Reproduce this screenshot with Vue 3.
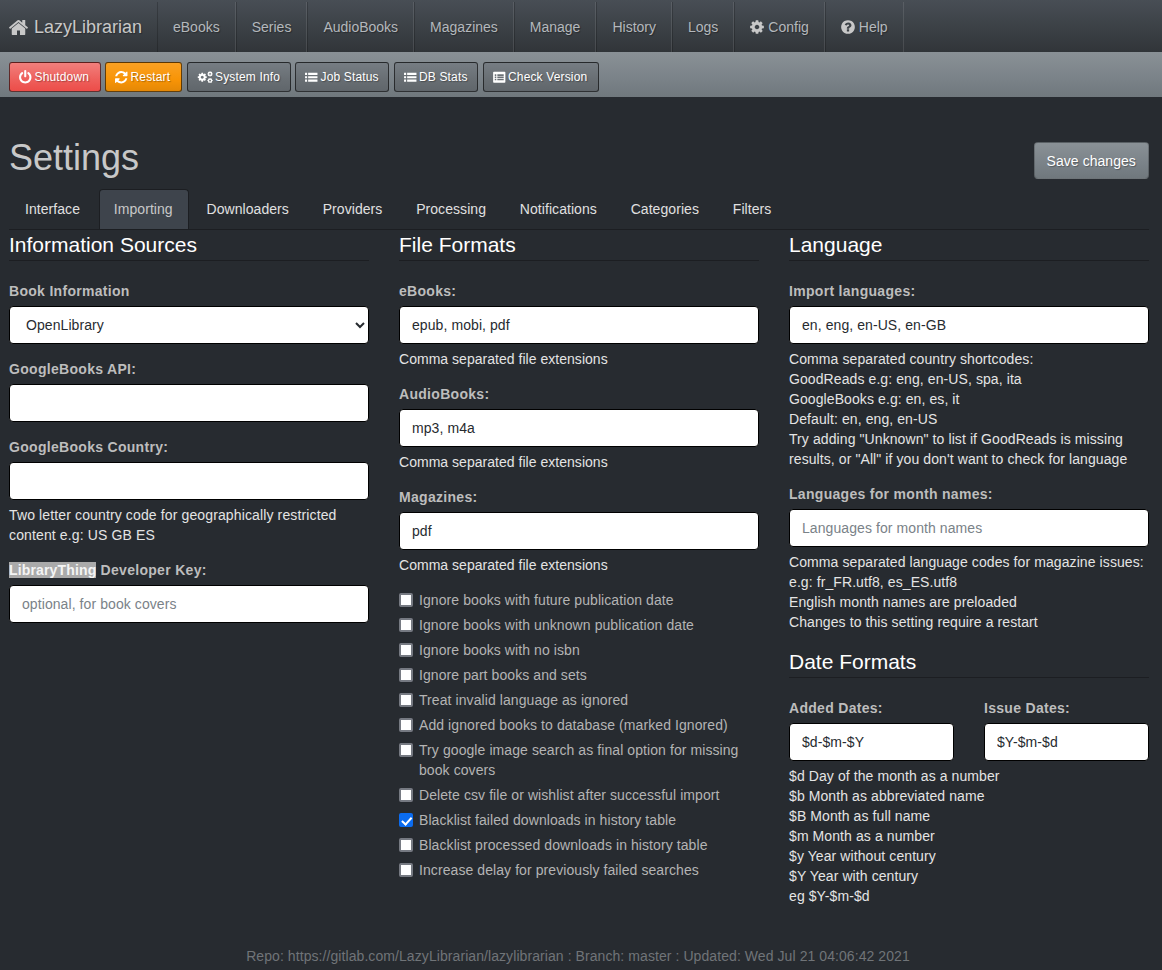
<script setup>
const cog = 'M1152 896q0-106-75-181t-181-75-181 75-75 181 75 181 181 75 181-75 75-181zm512-109v222q0 12-8 23t-20 13l-185 28q-19 54-39 91 35 50 107 138 10 12 10 25t-9 23q-27 37-99 108t-94 71q-12 0-26-9l-138-108q-44 23-91 38-16 136-29 186-7 28-36 28h-222q-14 0-24.500-8.500t-11.500-21.500l-28-184q-49-16-90-37l-141 107q-10 9-25 9-14 0-25-11-126-114-165-168-7-10-7-23 0-12 8-23 15-21 51-66.500t54-70.500q-27-50-41-99l-183-27q-13-2-21-12.500t-8-23.500v-222q0-12 8-23t19-13l186-28q14-46 39-92-40-57-107-138-10-12-10-24 0-10 9-23 26-36 98.500-107.500t94.500-71.500q13 0 26 10l138 107q44-23 91-38 16-136 29-186 7-28 36-28h222q14 0 24.500 8.500t11.500 21.500l28 184q49 16 90 37l142-107q9-9 24-9 13 0 25 10 129 119 165 170 7 8 7 22 0 12-8 23-15 21-51 66.500t-54 70.500q26 50 41 98l183 28q13 2 21 12.500t8 23.500z'
const home = 'M1472 992v480q0 26-19 45t-45 19h-384v-384h-256v384h-384q-26 0-45-19t-19-45v-480q0-1 .5-3t.5-3l575-474 575 474q1 2 1 6zm223-69l-62 74q-8 9-21 11h-3q-13 0-21-7l-692-577-692 577q-12 8-24 7-13-2-21-11l-62-74q-8-10-7-23.500t11-21.500l719-599q32-26 76-26t76 26l244 204v-195q0-14 9-23t23-9h192q14 0 23 9t9 23v408l219 182q10 8 11 21.500t-7 23.500z'
const power = 'M1664 896q0 156-61 298t-164 245-245 164-298 61-298-61-245-164-164-245-61-298q0-182 80.500-343t226.500-270q43-32 95.500-25t83.500 50q32 42 24.500 94.500t-49.500 84.500q-98 74-151.500 181t-53.500 228q0 104 40.500 198.500t109.500 163.500 163.500 109.500 198.500 40.500 198.500-40.500 163.500-109.500 109.500-163.500 40.500-198.500q0-121-53.500-228t-151.500-181q-42-32-49.500-84.500t24.500-94.500q31-43 84-50t95 25q146 109 226.500 270t80.500 343zm-640-768v640q0 52-38 90t-90 38-90-38-38-90v-640q0-52 38-90t90-38 90 38 38 90z'
const refresh = 'M1639 1056q0 5-1 7-64 268-268 434.500t-478 166.500q-146 0-282.500-55t-243.500-157l-129 129q-19 19-45 19t-45-19-19-45v-448q0-26 19-45t45-19h448q26 0 45 19t19 45-19 45l-137 137q71 66 161 102t187 36q134 0 250-65t186-179q11-17 53-117 8-23 30-23h192q13 0 22.500 9.500t9.500 22.500zm25-800v448q0 26-19 45t-45 19h-448q-26 0-45-19t-19-45 19-45l138-138q-148-137-349-137-134 0-250 65t-186 179q-11 17-53 117-8 23-30 23h-199q-13 0-22.500-9.500t-9.500-22.500v-7q65-268 270-434.500t480-166.500q146 0 284 55.500t245 156.500l130-129q19-19 45-19t45 19 19 45z'
const question = 'M1024 1376v-192q0-14-9-23t-23-9h-192q-14 0-23 9t-9 23v192q0 14 9 23t23 9h192q14 0 23-9t9-23zm256-672q0-88-55.500-163t-138.500-116-170-41q-243 0-371 213-15 24 8 42l132 100q7 6 19 6 16 0 25-12 53-68 86-92 34-24 86-24 48 0 85.500 26t37.500 59q0 38-20 61t-68 45q-63 28-115.500 86.500t-52.500 125.500v36q0 14 9 23t23 9h192q14 0 23-9t9-23q0-19 21.500-49.500t54.500-49.500q32-18 49-28.500t46-35 44.500-48 28-60.500 12.500-81zm384 192q0 209-103 385.500t-279.500 279.500-385.500 103-385.500-103-279.500-279.500-103-385.500 103-385.500 279.500-279.500 385.500-103 385.500 103 279.500 279.500 103 385.500z'
const list = 'M128 352h256v256h-256zM512 352h1152v256h-1152zM128 768h256v256h-256zM512 768h1152v256h-1152zM128 1184h256v256h-256zM512 1184h1152v256h-1152z'
const listAlt = 'M240 224h1312q100 0 100 100v1144q0 100-100 100h-1312q-100 0-100-100v-1144q0-100 100-100zM340 540v190h190v-190zM660 540v190h790v-190zM340 810v190h190v-190zM660 810v190h790v-190zM340 1080v190h190v-190zM660 1080v190h790v-190z'

const links = ['eBooks', 'Series', 'AudioBooks', 'Magazines', 'Manage', 'History', 'Logs']

const tools = [
  { label: 'Shutdown', kind: 'danger', d: power, width: 91.5 },
  { label: 'Restart', kind: 'warning', d: refresh, width: 77 },
  { label: 'System Info', kind: 'plain', cogs: true, width: 104 },
  { label: 'Job Status', kind: 'plain', d: list, width: 94 },
  { label: 'DB Stats', kind: 'plain', d: list, width: 84.5 },
  { label: 'Check Version', kind: 'plain', d: listAlt, width: 116 }
]

const tabs = ['Interface', 'Importing', 'Downloaders', 'Providers', 'Processing', 'Notifications', 'Categories', 'Filters']

const options = [
  { text: 'Ignore books with future publication date' },
  { text: 'Ignore books with unknown publication date' },
  { text: 'Ignore books with no isbn' },
  { text: 'Ignore part books and sets' },
  { text: 'Treat invalid language as ignored' },
  { text: 'Add ignored books to database (marked Ignored)' },
  { text: 'Try google image search as final option for missing book covers' },
  { text: 'Delete csv file or wishlist after successful import' },
  { text: 'Blacklist failed downloads in history table', checked: true },
  { text: 'Blacklist processed downloads in history table' },
  { text: 'Increase delay for previously failed searches' }
]
</script>

<template>
  <div class="page">
    <nav class="navbar">
      <a class="brand">
        <svg class="brand-icon" viewBox="0 0 1792 1792"><path :d="home" /></svg>
        LazyLibrarian
      </a>
      <a v-for="l in links" :key="l" class="nav-link">{{ l }}</a>
      <a class="nav-link">
        <svg class="nav-icon" viewBox="0 0 1792 1792"><path :d="cog" /></svg>
        Config
      </a>
      <a class="nav-link">
        <svg class="nav-icon" viewBox="0 0 1792 1792"><path :d="question" /></svg>
        Help
      </a>
    </nav>

    <div class="toolbar">
      <button v-for="t in tools" :key="t.label" class="tool" :class="t.kind" :style="{ width: t.width + 'px' }">
        <svg v-if="t.cogs" class="tool-icon cogs" viewBox="0 0 2400 1792">
          <path :d="cog" transform="translate(0 130) scale(.85)" />
          <path :d="cog" transform="translate(1450 -40) scale(.5)" />
          <path :d="cog" transform="translate(1450 930) scale(.5)" />
        </svg>
        <svg v-else class="tool-icon" viewBox="0 0 1792 1792"><path :d="t.d" fill-rule="evenodd" /></svg>
        {{ t.label }}
      </button>
    </div>

    <main class="content">
      <div class="title-row">
        <h1>Settings</h1>
        <button class="save">Save changes</button>
      </div>

      <ul class="tabs">
        <li v-for="t in tabs" :key="t" class="tab" :class="{ active: t === 'Importing' }">{{ t }}</li>
      </ul>

      <div class="columns">
        <section>
          <h2>Information Sources</h2>
          <div class="group">
            <label>Book Information</label>
            <select class="control"><option>OpenLibrary</option></select>
          </div>
          <div class="group">
            <label>GoogleBooks API:</label>
            <input class="control" type="text" />
          </div>
          <div class="group">
            <label>GoogleBooks Country:</label>
            <input class="control" type="text" />
            <p class="help wide">Two letter country code for geographically restricted content e.g: US GB ES</p>
          </div>
          <div class="group">
            <label><span class="selected">LibraryThing</span> Developer Key:</label>
            <input class="control" type="text" placeholder="optional, for book covers" />
          </div>
        </section>

        <section>
          <h2>File Formats</h2>
          <div class="group">
            <label>eBooks:</label>
            <input class="control" type="text" value="epub, mobi, pdf" />
            <p class="help tight">Comma separated file extensions</p>
          </div>
          <div class="group">
            <label>AudioBooks:</label>
            <input class="control" type="text" value="mp3, m4a" />
            <p class="help tight">Comma separated file extensions</p>
          </div>
          <div class="group">
            <label>Magazines:</label>
            <input class="control" type="text" value="pdf" />
            <p class="help tight">Comma separated file extensions</p>
          </div>
          <div class="checks">
            <label v-for="o in options" :key="o.text" class="check">
              <input type="checkbox" :checked="o.checked" />
              <span>{{ o.text }}</span>
            </label>
          </div>
        </section>

        <section>
          <h2>Language</h2>
          <div class="group">
            <label>Import languages:</label>
            <input class="control" type="text" value="en, eng, en-US, en-GB" />
            <p class="help">
              Comma separated country shortcodes:<br />
              GoodReads e.g: eng, en-US, spa, ita<br />
              GoogleBooks e.g: en, es, it<br />
              Default: en, eng, en-US<br />
              Try adding "Unknown" to list if GoodReads is missing results, or "All" if you don't want to check for language
            </p>
          </div>
          <div class="group">
            <label>Languages for month names:</label>
            <input class="control" type="text" placeholder="Languages for month names" />
            <p class="help">
              Comma separated language codes for magazine issues:<br />
              e.g: fr_FR.utf8, es_ES.utf8<br />
              English month names are preloaded<br />
              Changes to this setting require a restart
            </p>
          </div>

          <h2 class="second">Date Formats</h2>
          <div class="date-row">
            <div class="group">
              <label>Added Dates:</label>
              <input class="control" type="text" value="$d-$m-$Y" />
            </div>
            <div class="group">
              <label>Issue Dates:</label>
              <input class="control" type="text" value="$Y-$m-$d" />
            </div>
          </div>
          <p class="help">
            $d Day of the month as a number<br />
            $b Month as abbreviated name<br />
            $B Month as full name<br />
            $m Month as a number<br />
            $y Year without century<br />
            $Y Year with century<br />
            eg $Y-$m-$d
          </p>
        </section>
      </div>

      <footer>Repo: https://gitlab.com/LazyLibrarian/lazylibrarian : Branch: master : Updated: Wed Jul 21 04:06:42 2021</footer>
    </main>
  </div>
</template>

<style>
html, body {
  margin: 0;
  background: #272b30;
}
</style>

<style scoped>
.page {
  height: 970px;
  overflow: hidden;
  background: #272b30;
  color: #c8c8c8;
  font: 14px/20px "Liberation Sans", Arial, sans-serif;
}

.navbar {
  display: flex;
  height: 52px;
  box-sizing: border-box;
  padding-top: 2px;
  background: linear-gradient(#484e55, #3a3f44 60%, #313539);
  text-shadow: 1px 1px 1px rgba(0, 0, 0, .3);
}
.brand {
  display: flex;
  align-items: center;
  gap: 5px;
  width: 148px;
  padding-left: 9px;
  font-size: 18px;
  color: #c8c8c8;
}
.brand-icon {
  width: 21px;
  height: 21px;
  margin-left: -1px;
  fill: #c8c8c8;
}
.nav-link {
  display: flex;
  align-items: center;
  gap: 3px;
  padding: 0 15px;
  color: #b4b8bc;
  border-left: 1px solid rgba(0, 0, 0, .2);
  border-right: 1px solid rgba(255, 255, 255, .1);
}
.nav-icon {
  width: 16px;
  height: 16px;
  margin-left: -1px;
  fill: #c8c8c8;
}

.toolbar {
  display: flex;
  gap: 4.5px;
  height: 45px;
  box-sizing: border-box;
  padding: 10px 0 0 9px;
  background: linear-gradient(#8a9196, #7a8288 60%, #70787d);
}
.tool {
  display: flex;
  align-items: center;
  gap: 2px;
  height: 30px;
  box-sizing: border-box;
  padding: 0 0 0 10px;
  border: 1px solid rgba(0, 0, 0, .6);
  border-radius: 3px;
  font: 12px/18px "Liberation Sans", Arial, sans-serif;
  letter-spacing: .15px;
  white-space: nowrap;
  color: #fff;
  text-shadow: 1px 1px 1px rgba(0, 0, 0, .3);
}
.tool-icon {
  width: 14.5px;
  height: 14.5px;
  margin-left: -2px;
  fill: #fff;
}
.tool-icon.cogs {
  width: 16.5px;
  height: 12.5px;
  margin-left: -1px;
}
.tool.danger {
  background: linear-gradient(#f17f7c, #ee5f5b 60%, #ec4d49);
}
.tool.warning {
  background: linear-gradient(#faa123, #f89406 60%, #e48806);
}
.tool.plain {
  background: linear-gradient(#767d83, #686e73 60%, #60666b);
}

.content {
  padding: 0 13px 0 9px;
}
.title-row {
  display: flex;
  justify-content: space-between;
  align-items: flex-start;
  height: 92px;
}
h1 {
  margin: 40px 0 0;
  font-size: 36px;
  line-height: 42px;
  font-weight: 400;
  color: #c8c8c8;
}
.save {
  width: 114.5px;
  height: 37px;
  margin: 45px .5px 0 0;
  padding: 0;
  border: 1px solid rgba(0, 0, 0, .2);
  border-radius: 4px;
  background: linear-gradient(#8a9196, #7a8288 60%, #70787d);
  font: 14px/20px "Liberation Sans", Arial, sans-serif;
  letter-spacing: .05px;
  color: #fff;
  text-shadow: 1px 1px 1px rgba(0, 0, 0, .3);
}

.tabs {
  display: flex;
  height: 41px;
  box-sizing: border-box;
  margin: 0;
  padding: 0;
  list-style: none;
  border-bottom: 1px solid #1c1e22;
}
.tab {
  height: 40px;
  box-sizing: border-box;
  margin-left: 2.8px;
  padding: 9px 15px 9px 14px;
  border: 1px solid transparent;
  border-bottom: 0;
  border-radius: 4px 4px 0 0;
  letter-spacing: .06px;
  color: #e0e0e0;
}
.tab:first-child {
  margin-left: 0;
  padding-left: 15px;
}
.tab.active {
  background: #3e444c;
  border-color: #1c1e22;
  color: #c8c8c8;
}

.columns {
  display: grid;
  grid-template-columns: repeat(3, 360px);
  gap: 30px;
}
h2 {
  margin: 3px 0 20px;
  padding-bottom: 4px;
  font-size: 21px;
  line-height: 23px;
  font-weight: 400;
  color: #fff;
  border-bottom: 1px solid #1c1e22;
}
h2.second {
  margin-top: 18px;
}
.group {
  margin-bottom: 15px;
}
.group > label {
  display: block;
  margin-bottom: 5px;
  font-weight: 700;
  letter-spacing: .3px;
  color: #bdbdbd;
}
.selected {
  background: #aaa;
  letter-spacing: .15px;
  color: #f4f4f4;
}
.control {
  display: block;
  width: 100%;
  height: 38px;
  box-sizing: border-box;
  padding: 6px 12px;
  border: 1px solid #000;
  border-radius: 4px;
  background: #fff;
  font: 14px/20px "Liberation Sans", Arial, sans-serif;
  letter-spacing: .08px;
  color: #272b30;
}
.control::placeholder {
  color: #7a8288;
}
.help {
  margin: 5px 0 0;
  letter-spacing: .09px;
  color: #e4e4e4;
}
.help.wide {
  letter-spacing: .13px;
}
.help.tight {
  letter-spacing: .03px;
}

.checks {
  display: flex;
  flex-direction: column;
  gap: 5px;
}
.check {
  display: flex;
  align-items: flex-start;
  letter-spacing: .08px;
  color: #b4b4b4;
}
.check input {
  appearance: none;
  position: relative;
  flex: none;
  width: 14px;
  height: 14px;
  box-sizing: border-box;
  margin: 3px 6px 0 0;
  border: 2px solid #767a82;
  border-radius: 2px;
  background: #fff;
}
.check input:checked {
  border-color: #0b6cf0;
  background: #0b6cf0;
}
.check input:checked::after {
  content: "";
  position: absolute;
  left: 2.5px;
  top: -.5px;
  width: 3.5px;
  height: 7.5px;
  border: solid #fff;
  border-width: 0 2px 2px 0;
  transform: rotate(42deg);
}

.date-row {
  display: grid;
  grid-template-columns: 165px 165px;
  gap: 30px;
}
.date-row .group {
  margin-bottom: 0;
}

footer {
  position: absolute;
  top: 946px;
  left: 8px;
  width: 1140px;
  text-align: center;
  letter-spacing: .075px;
  color: #707478;
}
</style>
